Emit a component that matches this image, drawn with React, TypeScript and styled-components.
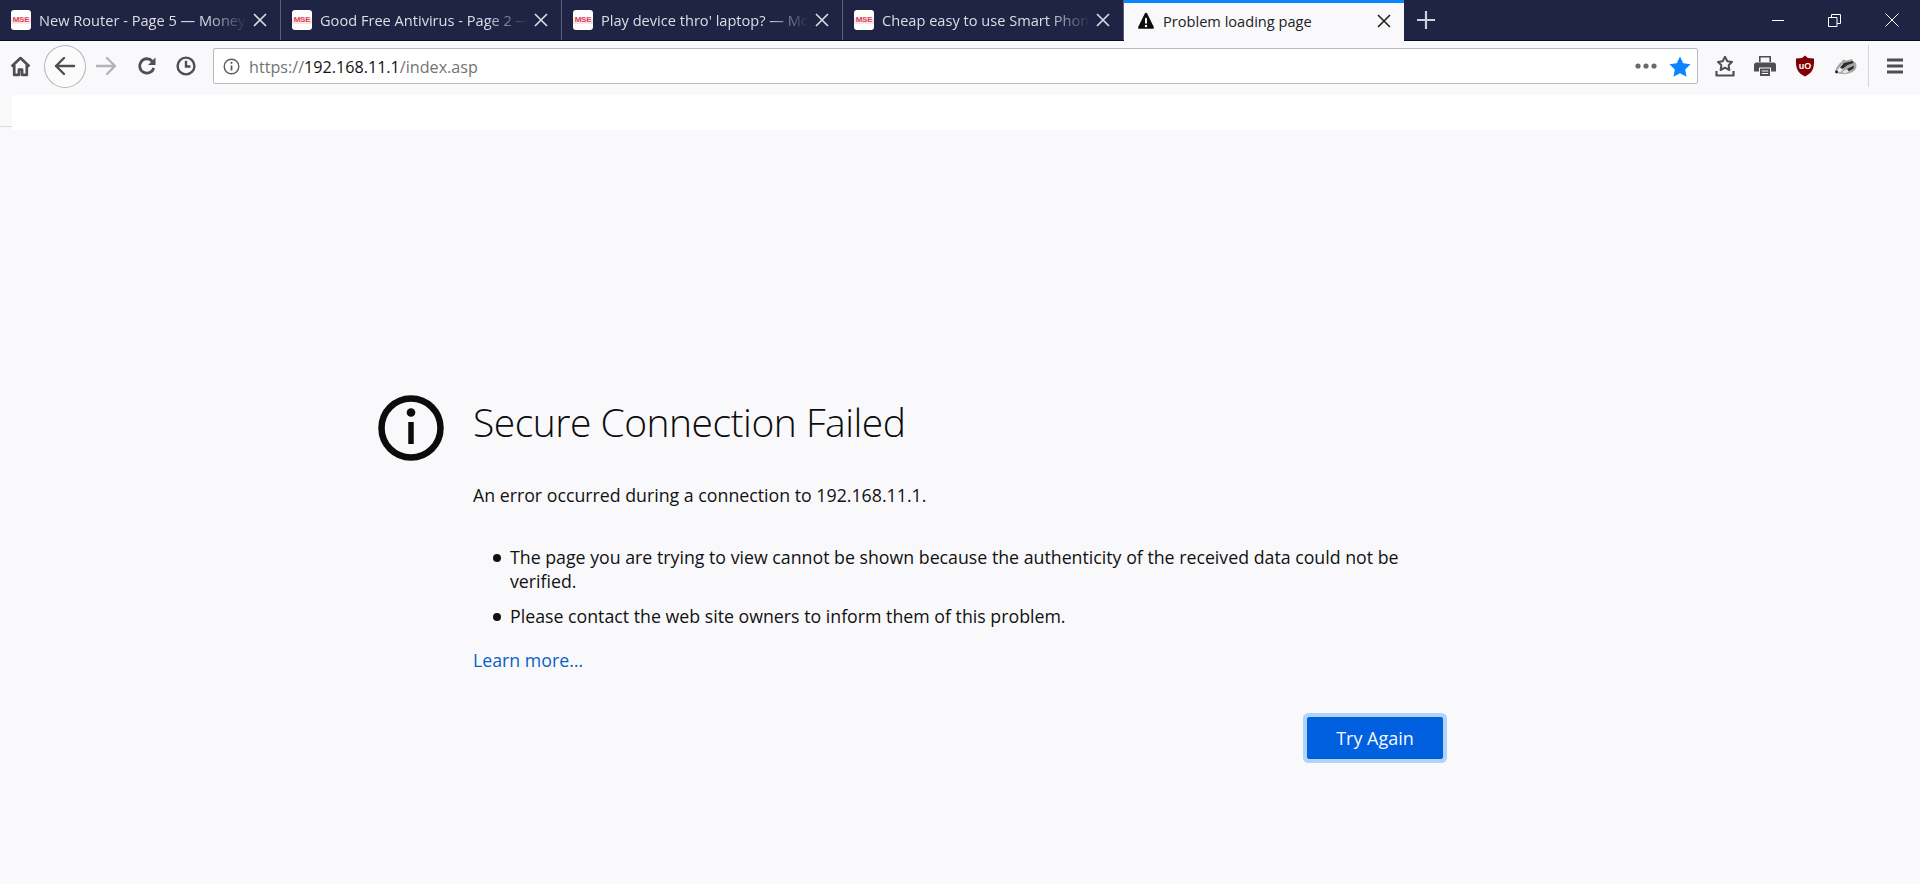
import React from 'react';
import styled, { createGlobalStyle } from 'styled-components';

const Global = createGlobalStyle`
  html, body { margin: 0; padding: 0; background: #fff; height: 100%; overflow: hidden; }
  #root { height: 100%; }
`;

const FONT = `"Open Sans", "Noto Sans", "Liberation Sans", sans-serif`;

const Window = styled.div`
  width: 1920px;
  height: 884px;
  display: flex;
  flex-direction: column;
  background: #f9f9fb;
  font-family: ${FONT};
`;

const TabBar = styled.div`
  height: 41px;
  flex: none;
  display: flex;
  background: #1f2444;
  border-bottom: 1px solid #0c0c14;
  box-sizing: border-box;
`;

const Tab = styled.div`
  width: 281px;
  flex: none;
  box-sizing: border-box;
  display: flex;
  align-items: center;
  padding: 0 13px 0 11px;
  border-right: 1px solid #5a5e78;
  color: #dcdde6;
`;

const ActiveTab = styled(Tab)`
  width: 280px;
  height: 41px;
  background: #f9f9fb;
  border-right: none;
  border-top: 3px solid #0a84ff;
  color: #222;
  padding: 0 13px 3px 13px;
`;

const Favicon = styled.span`
  width: 20px;
  height: 20px;
  flex: none;
  border-radius: 3px;
  background: linear-gradient(to bottom, #fff 0 40%, #fbe3e6 40% 70%, #fff 70%);
  color: #d8465c;
  font: 700 8px/20px "Liberation Sans", sans-serif;
  letter-spacing: -0.2px;
  text-align: center;
`;

const TabTitle = styled.span`
  flex: 1;
  min-width: 0;
  margin-left: 8px;
  font-size: 14.6px;
  white-space: nowrap;
  overflow: hidden;
  -webkit-mask-image: linear-gradient(to right, #000 80%, transparent 100%);
  mask-image: linear-gradient(to right, #000 80%, transparent 100%);
`;

const ActiveTitle = styled(TabTitle)`
  -webkit-mask-image: none;
  mask-image: none;
  margin-left: 8px;
`;

const CloseIcon = styled.svg`
  width: 14px;
  height: 14px;
  flex: none;
  margin-left: 6px;
  stroke: currentColor;
  stroke-width: 1.6;
  fill: none;
`;

const NewTab = styled.div`
  width: 44px;
  flex: none;
  display: flex;
  align-items: center;
  justify-content: center;
  color: #cfd0da;
`;

const WindowControls = styled.div`
  margin-left: auto;
  display: flex;
  align-items: center;
  color: #fff;
`;

const WinBtn = styled.div`
  width: 57px;
  height: 40px;
  display: flex;
  align-items: center;
  justify-content: center;
`;

const NavBar = styled.div`
  height: 54px;
  flex: none;
  display: flex;
  align-items: center;
  background: #f9f9fb;
  padding: 0 0 4px 8px;
  box-sizing: border-box;
`;

const NavIcon = styled.div<{ $w: number }>`
  width: ${p => p.$w}px;
  height: 42px;
  flex: none;
  display: flex;
  align-items: center;
  justify-content: center;
  color: #4f4f52;
`;

const BackButton = styled.div`
  width: 42px;
  height: 43px;
  margin-left: 12px;
  box-sizing: border-box;
  flex: none;
  border: 1px solid #b5b5b8;
  border-radius: 50%;
  background: #fbfbfc;
  display: flex;
  align-items: center;
  justify-content: center;
  color: #4f4f52;
`;

const UrlBar = styled.div`
  width: 1485px;
  height: 36px;
  margin-left: 9px;
  flex: none;
  box-sizing: border-box;
  background: #fff;
  border: 1px solid #b9b9bb;
  border-radius: 2px;
  display: flex;
  align-items: center;
  padding: 0 6px 0 9px;
  color: #5c5c5f;
`;

const UrlText = styled.div`
  margin-left: 9px;
  padding-top: 2px;
  font-size: 16.15px;
  color: #737373;
  white-space: nowrap;
`;

const Host = styled.span`
  color: #111;
`;

const UrlEnd = styled.div`
  margin-left: auto;
  display: flex;
  align-items: center;
  gap: 12px;
`;

const ToolIcons = styled.div`
  display: flex;
  flex: none;
  align-items: center;
  margin-left: 7px;
`;

const ToolIcon = styled.div`
  width: 40px;
  height: 42px;
  display: flex;
  align-items: center;
  justify-content: center;
  color: #4f4f52;
`;

const BadgerIcon = styled.svg`
  margin-left: 2px;
`;

const Divider = styled.div`
  width: 1px;
  height: 42px;
  flex: none;
  background: #d5d5d8;
  margin-left: 3px;
`;

const MenuIcon = styled.div`
  width: 50px;
  height: 42px;
  flex: none;
  box-sizing: border-box;
  padding-left: 2px;
  display: flex;
  align-items: center;
  justify-content: center;
  color: #4f4f52;
`;

const Band = styled.div`
  display: flex;
  flex: none;
  height: 35px;
`;

const BandEdge = styled.div`
  width: 12px;
  height: 32px;
  box-sizing: border-box;
  border-bottom: 1px solid #dcdcde;
`;

const BandFill = styled.div`
  flex: 1;
  background: #fff;
`;

const Page = styled.main`
  flex: 1;
  display: flex;
  padding: 265px 0 0 378px;
  color: #111;
`;

const BigIcon = styled.svg`
  width: 66px;
  height: 66px;
  flex: none;
  color: #0c0c0d;
`;

const Content = styled.div`
  width: 975px;
  margin-left: 29px;
  font-size: 17.75px;
  line-height: 24.5px;
`;

const Heading = styled.h1`
  margin: 1px 0 0;
  font-size: 39px;
  line-height: 52px;
  font-weight: 300;
  letter-spacing: -0.5px;
  color: #0c0c0d;
`;

const Para = styled.p`
  margin: 35px 0 0;
`;

const List = styled.ul`
  margin: 37px 0 0;
  padding: 0 0 0 20px;
  list-style: none;
`;

const Item = styled.li`
  display: flex;
  margin-bottom: 10px;
  &::before {
    content: '';
    flex: none;
    width: 8px;
    height: 8px;
    margin: 9px 9px 0 0;
    border-radius: 50%;
    background: #111;
  }
`;

const LearnMore = styled.a`
  display: block;
  margin-top: 20px;
  color: #0a5fc8;
  text-decoration: none;
`;

const Actions = styled.div`
  display: flex;
  justify-content: flex-end;
  margin-top: 44px;
`;

const TryAgain = styled.button`
  width: 136px;
  height: 42px;
  margin-right: 5px;
  box-sizing: border-box;
  border: 1px solid #0a5cc9;
  border-radius: 2px;
  background: #0060df;
  box-shadow: 0 0 0 4px #aed4fc;
  color: #f4f8ff;
  font: 400 18px ${FONT};
  padding: 0;
`;

const Close = () => (
  <CloseIcon viewBox="0 0 14 14"><path d="M1 1l12 12M13 1L1 13" /></CloseIcon>
);

const tabs = [
  'New Router - Page 5 — MoneyS',
  'Good Free Antivirus - Page 2 —',
  "Play device thro' laptop? — Mo",
  'Cheap easy to use Smart Phone',
];

export default function App() {
  return (
    <Window>
      <Global />
      <TabBar>
        {tabs.map(t => (
          <Tab key={t}>
            <Favicon>MSE</Favicon>
            <TabTitle>{t}</TabTitle>
            <Close />
          </Tab>
        ))}
        <ActiveTab>
          <svg width="18" height="18" viewBox="0 0 18 18">
            <path d="M9 .8c.5 0 .9.3 1.200.8l6.600 13.400c.4.800-.1 1.800-1.100 1.800H2.300c-1 0-1.500-1-1.100-1.800L7.800 1.600C8.100 1.100 8.500.8 9 .8z" fill="#0c0c0d" />
            <rect x="8" y="5.800" width="2" height="6" rx="1" fill="#fff" />
            <circle cx="9" cy="14" r="1.200" fill="#fff" />
          </svg>
          <ActiveTitle>Problem loading page</ActiveTitle>
          <Close />
        </ActiveTab>
        <NewTab>
          <svg width="18" height="18" viewBox="0 0 18 18" stroke="currentColor" strokeWidth="2.200" fill="none">
            <path d="M9 0v18M0 9h18" />
          </svg>
        </NewTab>
        <WindowControls>
          <WinBtn>
            <svg width="14" height="14" viewBox="0 0 14 14" stroke="currentColor" fill="none"><path d="M1 7.500h12" /></svg>
          </WinBtn>
          <WinBtn>
            <svg width="13" height="13" viewBox="0 0 13 13" stroke="currentColor" fill="none"><path d="M.5 3.500h8.500v9H.5zM3.500 3.500V.5h9v9H9" /></svg>
          </WinBtn>
          <WinBtn>
            <svg width="14" height="14" viewBox="0 0 14 14" stroke="currentColor" fill="none"><path d="M.5.5l13 13M13.500.5l-13 13" /></svg>
          </WinBtn>
        </WindowControls>
      </TabBar>
      <NavBar>
        <NavIcon $w={24}>
          <svg width="21" height="21" viewBox="0 0 20 20" fill="none" stroke="currentColor" strokeWidth="2.600" strokeLinejoin="round">
            <path d="M1.500 10L10 2l8.500 8M4 8.500V18h4.500v-5h3v5H16V8.500" />
          </svg>
        </NavIcon>
        <BackButton>
          <svg width="22" height="20" viewBox="0 0 22 20" fill="none" stroke="currentColor" strokeWidth="2.400" strokeLinecap="round" strokeLinejoin="round">
            <path d="M2 10h18M10 2l-8 8 8 8" />
          </svg>
        </BackButton>
        <NavIcon $w={40}>
          <svg width="22" height="20" viewBox="0 0 22 20" fill="none" stroke="#b4b4b6" strokeWidth="2.400" strokeLinecap="round" strokeLinejoin="round">
            <path d="M2 10h18M12 2l8 8-8 8" />
          </svg>
        </NavIcon>
        <NavIcon $w={42}>
          <svg width="20" height="20" viewBox="0 0 20 20" fill="none" stroke="currentColor" strokeWidth="2.800">
            <path d="M16.800 12a7.200 7.200 0 1 1-1.500-6.800" />
            <path d="M18.500 1.500v7.500H11z" fill="currentColor" stroke="none" />
          </svg>
        </NavIcon>
        <NavIcon $w={36}>
          <svg width="20" height="20" viewBox="0 0 20 20" fill="none" stroke="currentColor" strokeWidth="2.400">
            <circle cx="10" cy="10" r="8.400" />
            <path d="M10 4.800V10.500h4.500" />
          </svg>
        </NavIcon>
        <UrlBar>
          <svg width="17" height="17" viewBox="0 0 17 17" fill="none" stroke="currentColor" strokeWidth="1.400">
            <circle cx="8.500" cy="8.500" r="7.300" />
            <path d="M8.500 7.500v5" strokeWidth="1.800" />
            <circle cx="8.500" cy="4.800" r="1.100" fill="currentColor" stroke="none" />
          </svg>
          <UrlText>https://<Host>192.168.11.1</Host>/index.asp</UrlText>
          <UrlEnd>
            <svg width="22" height="6" viewBox="0 0 22 6" fill="#6a6a6d">
              <circle cx="3" cy="3" r="2.600" /><circle cx="11" cy="3" r="2.600" /><circle cx="19" cy="3" r="2.600" />
            </svg>
            <svg width="22" height="21" viewBox="0 0 22 21" fill="#0a84ff">
              <path d="M11 .6l3.200 6.700 7.300 1-5.300 5.100 1.300 7.300L11 17.200l-6.500 3.500 1.300-7.300L.5 8.300l7.300-1z" />
            </svg>
          </UrlEnd>
        </UrlBar>
        <ToolIcons>
          <ToolIcon>
            <svg width="20" height="22" viewBox="0 0 20 22" fill="none" stroke="currentColor" strokeWidth="2" strokeLinejoin="round">
              <path d="M10 1.800l2.300 4.400 4.800.7-3.500 3.400.8 4.700-4.400-2.300-4.400 2.300.8-4.700-3.500-3.400 4.800-.7z" />
              <path d="M1.500 16v4.500h17V16" strokeWidth="2.200" />
            </svg>
          </ToolIcon>
          <ToolIcon>
            <svg width="22" height="20" viewBox="0 0 22 20" fill="currentColor">
              <path d="M5 0h12v6h-1.600V1.600H6.600V6H5z" />
              <path d="M2.500 6.500h17A2.500 2.500 0 0 1 22 9v6.500h-5v-4H5v4H0V9a2.500 2.500 0 0 1 2.500-2.500z" />
              <path d="M6 12.500h10V20H6zM7.800 14.500v1h6.400v-1zm0 2.500v1h6.400v-1z" fillRule="evenodd" />
            </svg>
          </ToolIcon>
          <ToolIcon>
            <svg width="20" height="22" viewBox="0 0 20 22">
              <path d="M10 .5l3 2.500 6 .5c.3 7 0 14-9 18-9-4-9.300-11-9-18l6-.5z" fill="#800000" />
              <text x="10" y="14" textAnchor="middle" fontFamily="Liberation Sans, sans-serif" fontSize="9" fontWeight="700" fill="#fff">uO</text>
            </svg>
          </ToolIcon>
          <ToolIcon>
            <BadgerIcon width="22" height="17" viewBox="0 0 22 17">
              <path d="M0 13.500C1.500 9 3.500 5.500 6.500 4L8 1.500l3 1 6-1.500 1 2 3 2c1 3 .5 6-2 8-3 2.500-8 3.500-12 3-3-.3-6-1-7-2.500z" fill="#a8a8a8" />
              <path d="M2 12.500L7.500 6l6-1.500-4 5L5 14.500z" fill="#f4f4f4" />
              <path d="M5 9.500L9 5l9-2 .5 2-6 2-5 4zM11 11.500l8-4-.5 3-6 3.500z" fill="#2c2c2c" />
              <path d="M7 14l5-3 2 2.500-4 2z" fill="#e8e8e8" />
              <circle cx="1.500" cy="14" r="1.400" fill="#222" />
            </BadgerIcon>
          </ToolIcon>
        </ToolIcons>
        <Divider />
        <MenuIcon>
          <svg width="20" height="16" viewBox="0 0 20 16" stroke="currentColor" strokeWidth="2.800">
            <path d="M2 2h16M2 8h16M2 14h16" />
          </svg>
        </MenuIcon>
      </NavBar>
      <Band>
        <BandEdge />
        <BandFill />
      </Band>
      <Page>
        <BigIcon viewBox="0 0 66 66" fill="none" stroke="currentColor">
          <circle cx="33" cy="33" r="29.500" strokeWidth="6.500" />
          <path d="M33 27v22" strokeWidth="5.500" />
          <circle cx="33" cy="17.500" r="4.300" fill="currentColor" stroke="none" />
        </BigIcon>
        <Content>
          <Heading>Secure Connection Failed</Heading>
          <Para>An error occurred during a connection to 192.168.11.1.</Para>
          <List>
            <Item><span>The page you are trying to view cannot be shown because the authenticity of the received data could not be verified.</span></Item>
            <Item><span>Please contact the web site owners to inform them of this problem.</span></Item>
          </List>
          <LearnMore href="#">Learn more…</LearnMore>
          <Actions>
            <TryAgain>Try Again</TryAgain>
          </Actions>
        </Content>
      </Page>
    </Window>
  );
}
